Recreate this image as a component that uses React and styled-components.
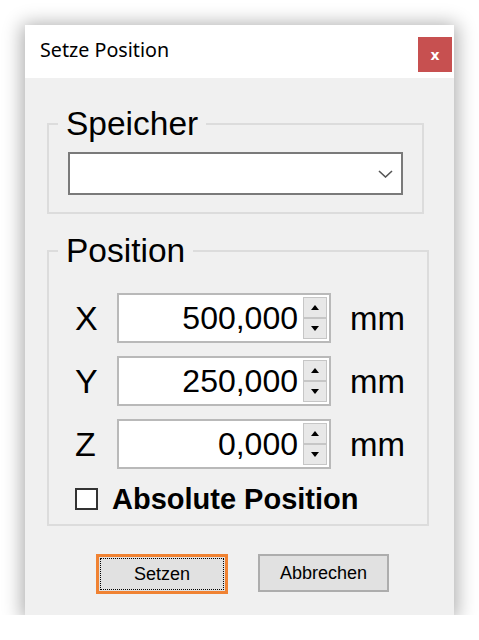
import React from "react";
import styled, { createGlobalStyle } from "styled-components";

const Global = createGlobalStyle`
  html, body { margin: 0; padding: 0; background: #ffffff; }
  body { font-family: "Liberation Sans", Arial, sans-serif; }
`;

const Page = styled.div`
  padding: 25px 0 0 25px;
`;

const Window = styled.div`
  width: 429px;
  height: 590px;
  background: #f0f0f0;
  box-shadow: 0 2px 18px 3px rgba(0, 0, 0, 0.33);
  display: flex;
  flex-direction: column;
`;

const TitleBar = styled.div`
  height: 53px;
  background: #ffffff;
  display: flex;
  align-items: flex-start;
  justify-content: space-between;
  box-sizing: border-box;
  padding: 0 2px 0 15px;
`;

const Title = styled.div`
  font-family: "Noto Sans", "Open Sans", sans-serif;
  font-size: 19.7px;
  color: #000;
  margin-top: 11px;
`;

const CloseBtn = styled.div`
  width: 34px;
  height: 35px;
  margin-top: 12px;
  background: #c75050;
  color: #fff;
  font-family: "DejaVu Sans", sans-serif;
  font-weight: bold;
  font-size: 14px;
  display: flex;
  align-items: center;
  justify-content: center;
`;

const Body = styled.div`
  flex: 1;
  padding: 27px 25px 0 22px;
  display: flex;
  flex-direction: column;
`;

const Group = styled.fieldset`
  margin: ${(p) => p.$mt || 0}px ${(p) => p.$mr || 0}px 0 0;
  padding: ${(p) => p.$pad};
  border: 2px solid #dcdcdc;
  min-width: 0;
`;

const Legend = styled.legend`
  font-size: 33.5px;
  line-height: normal;
  color: #000;
  padding: 0 8px;
  margin-left: ${(p) => p.$ml}px;
`;

const Combo = styled.div`
  height: 43px;
  box-sizing: border-box;
  border: 2px solid #7a7a7a;
  background: #fff;
  display: flex;
  align-items: center;
  justify-content: flex-end;
  padding-right: 8px;
`;

const Rows = styled.div`
  display: grid;
  grid-template-columns: 23px 214px auto;
  column-gap: 19px;
  row-gap: 13px;
  align-items: center;
  padding-left: 26px;
`;

const AxisLabel = styled.div`
  font-size: 34px;
  color: #000;
  line-height: 1;
`;

const Unit = styled.div`
  font-size: 33px;
  color: #000;
  line-height: 1;
`;

const NumBox = styled.div`
  height: 50px;
  box-sizing: border-box;
  border: 2px solid #b9b9b9;
  background: #fff;
  display: flex;
  align-items: center;
  justify-content: flex-end;
  padding: 0 2px 0 0;
`;

const NumText = styled.div`
  font-size: 32px;
  color: #000;
  padding-right: 5px;
  line-height: 1;
`;

const Spinner = styled.div`
  width: 24px;
  height: 42px;
  display: flex;
  flex-direction: column;
`;

const SpinBtn = styled.div`
  flex: 1;
  box-sizing: border-box;
  border: 1px solid #c6c6c6;
  background: #e8e8e8;
  display: flex;
  align-items: center;
  justify-content: center;
`;

const CheckRow = styled.div`
  display: flex;
  align-items: center;
  height: 30px;
  margin-top: 15px;
  padding-left: 26px;
`;

const CheckBox = styled.div`
  width: 23px;
  height: 22px;
  box-sizing: border-box;
  border: 2px solid #333;
  background: #fff;
`;

const CheckLabel = styled.div`
  font-size: 29px;
  font-weight: bold;
  color: #000;
  margin-left: 14px;
  line-height: 1;
`;

const ButtonRow = styled.div`
  display: flex;
  justify-content: center;
  align-items: flex-start;
  gap: 30px;
  margin-top: 28px;
  padding-left: 9px;
`;

const Button = styled.div`
  width: ${(p) => p.$w}px;
  height: ${(p) => (p.$default ? 40 : 38)}px;
  box-sizing: border-box;
  border: ${(p) => (p.$default ? "3px solid #f08232" : "2px solid #adadad")};
  background: #e1e1e1;
  padding: 1px;
  font-size: 18px;
  color: #000;
  display: flex;
`;

const Focus = styled.div`
  flex: 1;
  display: flex;
  align-items: center;
  justify-content: center;
  border: ${(p) => (p.$on ? "1px dotted #000" : "1px solid transparent")};
`;

const Up = () => (
  <svg width="8" height="5" viewBox="0 0 8 5">
    <polygon points="4,0 8,5 0,5" fill="#000" />
  </svg>
);
const Down = () => (
  <svg width="8" height="5" viewBox="0 0 8 5">
    <polygon points="0,0 8,0 4,5" fill="#000" />
  </svg>
);

const NumField = ({ value }) => (
  <NumBox>
    <NumText>{value}</NumText>
    <Spinner>
      <SpinBtn>
        <Up />
      </SpinBtn>
      <SpinBtn>
        <Down />
      </SpinBtn>
    </Spinner>
  </NumBox>
);

export default function App() {
  const rows = [
    ["X", "500,000"],
    ["Y", "250,000"],
    ["Z", "0,000"],
  ];
  return (
    <>
      <Global />
      <Page>
        <Window>
          <TitleBar>
            <Title>Setze Position</Title>
            <CloseBtn>x</CloseBtn>
          </TitleBar>
          <Body>
            <Group $pad="9px 19px 17px" $mr={5}>
              <Legend $ml={-10}>Speicher</Legend>
              <Combo>
                <svg width="15" height="8" viewBox="0 0 15 8">
                  <polyline
                    points="1,1 7.5,7 14,1"
                    fill="none"
                    stroke="#555"
                    strokeWidth="1.6"
                  />
                </svg>
              </Combo>
            </Group>
            <Group $pad="23px 0 10px 0" $mt={18}>
              <Legend $ml={9}>Position</Legend>
              <Rows>
                {rows.map(([a, v]) => (
                  <React.Fragment key={a}>
                    <AxisLabel>{a}</AxisLabel>
                    <NumField value={v} />
                    <Unit>mm</Unit>
                  </React.Fragment>
                ))}
              </Rows>
              <CheckRow>
                <CheckBox />
                <CheckLabel>Absolute Position</CheckLabel>
              </CheckRow>
            </Group>
            <ButtonRow>
              <Button $w={132} $default>
                <Focus $on>Setzen</Focus>
              </Button>
              <Button $w={131}>
                <Focus>Abbrechen</Focus>
              </Button>
            </ButtonRow>
          </Body>
        </Window>
      </Page>
    </>
  );
}
